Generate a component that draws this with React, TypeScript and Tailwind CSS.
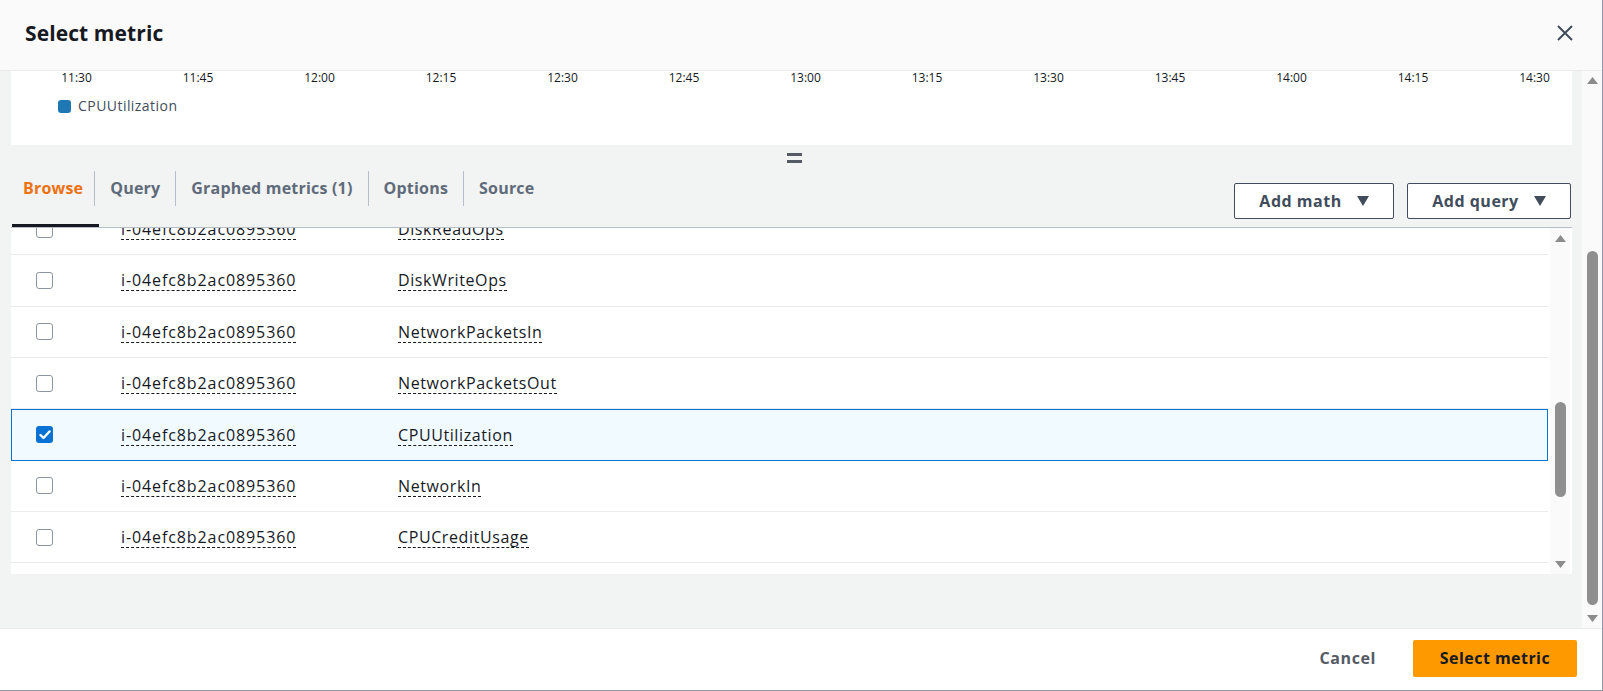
import React from 'react';

const INSTANCE = 'i-04efc8b2ac0895360';

const rows = [
  { metric: 'DiskReadOps' },
  { metric: 'DiskWriteOps' },
  { metric: 'NetworkPacketsIn' },
  { metric: 'NetworkPacketsOut' },
  { metric: 'CPUUtilization', checked: true },
  { metric: 'NetworkIn' },
  { metric: 'CPUCreditUsage' },
];

const times = ['11:30', '11:45', '12:00', '12:15', '12:30', '12:45', '13:00', '13:15', '13:30', '13:45', '14:00', '14:15', '14:30'];

function Arrow({ up }: { up?: boolean }) {
  return (
    <svg width="11" height="7" viewBox="0 0 11 7" className="shrink-0">
      {up ? <polygon points="5.5,0 11,7 0,7" fill="#8c8c8c" /> : <polygon points="0,0 11,0 5.5,7" fill="#8c8c8c" />}
    </svg>
  );
}

function Caret() {
  return (
    <svg width="12" height="10" viewBox="0 0 12 10">
      <polygon points="0,0 12,0 6,10" fill="#414d5c" />
    </svg>
  );
}

function Checkbox({ checked }: { checked?: boolean }) {
  if (checked) {
    return (
      <div className="w-[17px] h-[17px] rounded-[3px] bg-[#0972d3] flex items-center justify-center">
        <svg width="12" height="10" viewBox="0 0 12 10">
          <polyline points="1.5,5 4.5,8 10.5,1.5" fill="none" stroke="white" strokeWidth="2.4" strokeLinecap="round" strokeLinejoin="round" />
        </svg>
      </div>
    );
  }
  return <div className="w-[17px] h-[17px] rounded-[3px] border-[1.5px] border-[#8c959f] bg-white" />;
}

function Tab({ label, active }: { label: string; active?: boolean }) {
  return (
    <div className={`relative h-full ${active ? 'pl-[12px] pr-[11px]' : 'px-[15px]'}`}>
      <div className={`h-[34px] flex items-center text-[16px] font-bold tracking-[0.2px] ${active ? 'text-[#ec7211]' : 'text-[#5f6b7a]'}`}>{label}</div>
      {active && <div className="absolute left-[1px] bottom-0 w-[87px] h-[3px] bg-[#16191f]" />}
    </div>
  );
}

function Sep() {
  return <div className="w-px h-[35px] bg-[#b6bec9]" />;
}

export default function App() {
  return (
    <div className="w-[1603px] h-[691px] flex flex-col bg-white border-r border-b border-[#8d99a8] overflow-hidden font-['Open_Sans','Noto_Sans',sans-serif] text-[#16191f]">
      {/* header */}
      <div className="h-[71px] shrink-0 border-b border-[#e9ebed] bg-[#fafafa] flex items-center justify-between pl-[25px] pr-[29px] pb-[4px]">
        <div className="text-[21px] font-bold leading-none tracking-[0.1px]">Select metric</div>
        <svg width="16" height="16" viewBox="0 0 16 16">
          <path d="M1 1 L15 15 M15 1 L1 15" stroke="#414d5c" strokeWidth="2" fill="none" />
        </svg>
      </div>

      {/* body */}
      <div className="h-[557px] shrink-0 flex bg-[#f2f3f3]">
        <div className="flex-1 flex flex-col pl-[11px] pr-[10px] min-w-0">
          {/* chart remainder */}
          <div className="h-[74px] shrink-0 bg-white">
            <div className="ml-[49.5px] w-[1490px] flex justify-between text-[12px] leading-[14px] text-[#16191f]">
              {times.map((t) => (
                <div key={t} className="w-[32px] text-center">{t}</div>
              ))}
            </div>
            <div className="ml-[47px] mt-[13px] flex items-center gap-[7px]">
              <div className="w-[13px] h-[13px] rounded-[3px] bg-[#1f77b4]" />
              <div className="text-[14px] leading-[16px] tracking-[0.45px] text-[#414d5c]">CPUUtilization</div>
            </div>
          </div>

          {/* drag handle */}
          <div className="h-[26px] shrink-0 flex justify-center pt-[8px]">
            <div className="ml-[6px] flex flex-col gap-[3.5px]">
              <div className="w-[15px] h-[3px] bg-[#545b64]" />
              <div className="w-[15px] h-[3px] bg-[#545b64]" />
            </div>
          </div>

          {/* tabs */}
          <div className="h-[57px] shrink-0 flex justify-between border-b border-[#b6bec9] pr-[1px]">
            <div className="flex items-start h-full">
              <Tab label="Browse" active />
              <Sep />
              <Tab label="Query" />
              <Sep />
              <Tab label="Graphed metrics (1)" />
              <Sep />
              <Tab label="Options" />
              <Sep />
              <Tab label="Source" />
            </div>
            <div className="flex items-start gap-[13px] mt-[12px]">
              <button className="w-[160px] h-[36px] border border-[#414d5c] rounded-[2px] bg-white flex items-center justify-center gap-[15px] text-[16px] font-bold tracking-[0.5px] text-[#414d5c]">
                Add math <Caret />
              </button>
              <button className="w-[164px] h-[36px] border border-[#414d5c] rounded-[2px] bg-white flex items-center justify-center gap-[15px] text-[16px] font-bold tracking-[0.5px] text-[#414d5c]">
                Add query <Caret />
              </button>
            </div>
          </div>

          {/* table */}
          <div className="h-[346px] shrink-0 bg-white flex">
            <div className="w-[1537px] overflow-hidden">
              <div className="-mt-[24px]">
                {rows.map((r) => (
                  <div
                    key={r.metric}
                    className={`h-[51.33px] flex items-center text-[16px] ${
                      r.checked ? 'border border-[#0972d3] bg-[#f1faff] pl-[24px]' : 'border-b border-[#e9ebed] pl-[25px]'
                    }`}
                  >
                    <div className="w-[85px] flex items-center">
                      <Checkbox checked={r.checked} />
                    </div>
                    <div className="w-[277px]">
                      <span className="border-b border-dashed border-[#16191f] tracking-[0.9px] leading-[20px] inline-block">{INSTANCE}</span>
                    </div>
                    <div>
                      <span className="border-b border-dashed border-[#16191f] tracking-[0.6px] leading-[20px] inline-block">{r.metric}</span>
                    </div>
                  </div>
                ))}
              </div>
            </div>
            <div className="ml-[2px] w-[20px] bg-[#fafafa] flex flex-col items-center">
              <div className="mt-[7px]"><Arrow up /></div>
              <div className="mt-[160px] w-[11px] h-[95px] rounded-full bg-[#8f8f8f]" />
              <div className="mt-[64px]"><Arrow /></div>
            </div>
          </div>
          <div className="flex-1" />
        </div>

        {/* outer scrollbar */}
        <div className="w-[20px] shrink-0 bg-[#fafafa] flex flex-col items-center">
          <div className="mt-[6px]"><Arrow up /></div>
          <div className="mt-[167px] w-[11px] h-[354px] rounded-full bg-[#8f8f8f]" />
          <div className="mt-[10px]"><Arrow /></div>
        </div>
      </div>

      {/* footer */}
      <div className="flex-1 border-t border-[#e9ebed] flex items-center justify-end pr-[25px] pb-[3px]">
        <div className="mr-[37px] text-[16px] font-bold tracking-[0.6px] text-[#545b64]">Cancel</div>
        <button className="w-[164px] h-[37px] rounded-[2px] bg-[#ff9900] text-[16px] font-bold tracking-[0.45px] text-[#16191f]">Select metric</button>
      </div>
    </div>
  );
}
